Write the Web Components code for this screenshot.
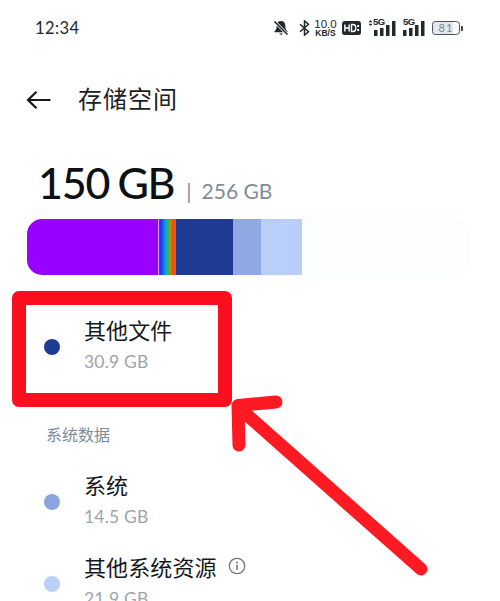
<!DOCTYPE html>
<html lang="zh">
<head>
<meta charset="utf-8">
<title>存储空间</title>
<style>
html,body{margin:0;padding:0;background:#fff}
body{width:500px;height:601px;overflow:hidden;position:relative;font-family:Lato,"Noto Sans CJK SC",sans-serif;color:#15191d}
storage-list{height:299px;margin-top:27px}
</style>
</head>
<body>
<status-bar></status-bar>
<app-header>存储空间</app-header>
<storage-summary used="150 GB" total="256 GB"></storage-summary>
<storage-bar></storage-bar>
<storage-list>
  <storage-item color="#1f3a93" name="其他文件" size="30.9 GB"></storage-item>
  <section-label>系统数据</section-label>
  <storage-item color="#8ba6df" name="系统" size="14.5 GB"></storage-item>
  <storage-item color="#b9cff5" name="其他系统资源" size="21.9 GB" info></storage-item>
</storage-list>
<red-annotation></red-annotation>
<script>
function def(name, html, init){
  customElements.define(name, class extends HTMLElement{
    connectedCallback(){
      if(this.shadowRoot) return;
      const r=this.attachShadow({mode:'open'});
      r.innerHTML=typeof html==='function'?html(this):html;
      if(init) init(r,this);
    }
  });
}
def('status-bar',`<style>
:host{display:flex;align-items:center;height:56px;box-sizing:border-box;padding:0 37px 0 35px;font-family:Lato,sans-serif;color:#23282d}
.t{font-size:16.5px;letter-spacing:.4px;flex:1}
.ic{display:flex;align-items:center}
svg{display:block}
.sp{display:flex;flex-direction:column;align-items:center;font-family:"Liberation Sans",sans-serif;font-weight:700;line-height:1;width:21px;margin:0 6px 0 5px}
.sp b{font-size:11.5px;font-weight:500;line-height:10px}.sp i{font-style:normal;font-size:8.5px;line-height:8px}
.sig{display:flex;align-items:flex-end;height:18px;position:relative}
.sig span{position:absolute;top:-2px;font:700 9.5px/10px "Liberation Sans",sans-serif;letter-spacing:-.5px}
.bat{display:flex;align-items:center}
.bat div{width:28px;height:14px;border:1.3px solid #4a5158;border-radius:3.5px;box-sizing:border-box;font:11px/12px Lato,sans-serif;text-align:center;color:#7a8590;background:linear-gradient(90deg,#e4e8ec 0 78%,#fff 78%);letter-spacing:1px}
.bat u{display:block;width:2px;height:5px;background:#3c4248;border-radius:0 1px 1px 0;margin-left:1px}
</style>
<span class="t">12:34</span>
<div class="ic">
<svg width="16" height="16" viewBox="0 0 16 16" style="margin-right:10px"><path d="M8 1c-2.800 0-4.300 2.100-4.300 4.600 0 2.800-.6 4.400-2.200 5.700v1h13v-1c-1.600-1.300-2.200-2.900-2.200-5.700C12.300 3.100 10.800 1 8 1z" fill="#23282d"/><path d="M6.200 13.500a1.900 1.900 0 0 0 3.600 0z" fill="#23282d"/><path d="M1.500 1.500l13 13" stroke="#fff" stroke-width="3"/><path d="M1.500 1.500l13 13" stroke="#23282d" stroke-width="1.600"/></svg>
<svg width="11" height="16" viewBox="0 0 11 16"><path d="M1 4.300l8.500 7.400-4 3.400V.9l4 3.400L1 11.700" fill="none" stroke="#23282d" stroke-width="1.500"/></svg>
<div class="sp"><b>10.0</b><i>KB/S</i></div>
<svg width="19" height="14" viewBox="0 0 20 14" preserveAspectRatio="none" style="margin-right:7px"><rect width="20" height="14" rx="2.500" fill="#23282d"/><path d="M3 3.500v7M3 7h4.500M7.500 3.500v7M10 3.500v7h1.500c2 0 3-1.400 3-3.500s-1-3.500-3-3.500z" fill="none" stroke="#fff" stroke-width="1.500"/><rect x="16" y="4" width="2" height="2" fill="#fff"/><rect x="16" y="8" width="2" height="2" fill="#fff"/></svg>
<div class="sig" style="width:29px;margin-right:6px"><span style="left:5px">5G</span>
<svg width="29" height="18" viewBox="0 0 29 18"><path d="M2.500 1l-2 2.200h4zM2.500 7l-2-2.200h4z" fill="#23282d"/><rect x="6" y="11" width="3.500" height="6" fill="#23282d"/><rect x="12" y="9" width="3.500" height="8" fill="#23282d"/><rect x="18" y="6" width="3.500" height="11" fill="#23282d"/><rect x="24" y="2" width="3.500" height="15" fill="#23282d"/></svg></div>
<div class="sig" style="width:22px;margin-right:7px"><span style="left:0">5G</span>
<svg width="22" height="18" viewBox="0 0 22 18"><rect x="0" y="11" width="3.500" height="6" fill="#23282d"/><rect x="6" y="9" width="3.500" height="8" fill="#23282d"/><rect x="12" y="6" width="3.500" height="11" fill="#23282d"/><rect x="18" y="2" width="3.500" height="15" fill="#23282d"/></svg></div>
<div class="bat"><div>81</div><u></u></div>
</div>`);
def('app-header',`<style>
:host{display:flex;align-items:center;height:50px;margin-top:16px;padding-left:26px;font-family:"Noto Sans CJK SC",sans-serif;font-size:24px;letter-spacing:1px;color:#1d2125}
svg{display:block;margin:6px 27px 0 0}
</style>
<svg width="25" height="20" viewBox="0 0 25 20"><path d="M24.500 10H2M10.500 1.700L2 10l8.500 8.300" fill="none" stroke="#15191d" stroke-width="2.200"/></svg>
<slot></slot>`);
def('storage-summary',h=>`<style>
:host{display:flex;align-items:baseline;height:97px;box-sizing:border-box;padding:33px 0 0 38px;font-family:Lato,sans-serif}
.u{font-size:43px;line-height:56px;font-weight:500;color:#0d1114;letter-spacing:-1.2px;word-spacing:-1.500px}
.s{font-size:21px;color:#7e8c99;margin-left:12px}
.d{margin-right:10px;font-size:21px}
</style>
<span class="u">${h.getAttribute('used')}</span><span class="s"><span class="d">|</span>${h.getAttribute('total')}</span>`);
def('storage-bar',`<style>
:host{display:flex;height:56px;margin:0 29px 0 27px;border-radius:15px;overflow:hidden;background:#fbfdff}
i{display:block;height:100%}
</style>
<i style="width:131px;background:#9800ff"></i>
<i style="width:18px;background:linear-gradient(90deg,#c9a0ff 0 4%,#3a1fe0 9%,#1257f0 25%,#06a5e8 42%,#3cae4a 58%,#9aa620 68%,#f0540f 75%,#f0540f 100%)"></i>
<i style="width:57px;background:#1f3a93"></i>
<i style="width:28px;background:#90a9e2"></i>
<i style="width:41px;background:#b9cff9"></i>`);
def('storage-list',`<style>
:host{display:block;overflow:hidden}
</style><slot></slot>`);
def('storage-item',h=>`<style>
:host{display:grid;grid-template-columns:16px 1fr;column-gap:24px;align-items:center;padding-left:44px;height:82px}
.d{width:16px;height:16px;border-radius:50%;background:${h.getAttribute('color')};margin-top:8px}
.w{margin-top:3px}
.n{font:22px/30px "Noto Sans CJK SC",sans-serif;letter-spacing:.1px;color:#15191d;display:flex;align-items:center}
.z{font:17.5px/26px Lato,sans-serif;color:#9aa5ae;letter-spacing:.2px;margin-top:5px}
svg{margin-left:11px;display:block}
</style>
<div class="d"></div>
<div class="w"><div class="n">${h.getAttribute('name')}${h.hasAttribute('info')?'<svg width="18" height="18" viewBox="0 0 18 18"><circle cx="9" cy="9" r="7.700" fill="none" stroke="#6d7780" stroke-width="1.300"/><rect x="8.200" y="7.800" width="1.600" height="5" fill="#6d7780"/><circle cx="9" cy="5.600" r="1" fill="#6d7780"/></svg>':''}</div><div class="z">${h.getAttribute('size')}</div></div>`);
def('section-label',`<style>
:host{display:block;height:73px;padding-left:46px;font:16px/24px "Noto Sans CJK SC",sans-serif;color:#7c8c9c;box-sizing:border-box;padding-top:38px}
</style><slot></slot>`);
def('red-annotation',`<style>
:host{position:absolute;inset:0;pointer-events:none;display:block}
.box{position:absolute;left:12px;top:291px;width:220px;height:116px;box-sizing:border-box;border:14px solid #fb0f1e;border-radius:7px}
svg{position:absolute;left:0;top:0}
</style>
<div class="box"></div>
<svg width="500" height="601" viewBox="0 0 500 601"><path d="M421 569L246 414M276 402L238 405.500L239 445" fill="none" stroke="#fd1a22" stroke-width="13" stroke-linecap="round" stroke-linejoin="round"/></svg>`);
</script>
</body>
</html>
